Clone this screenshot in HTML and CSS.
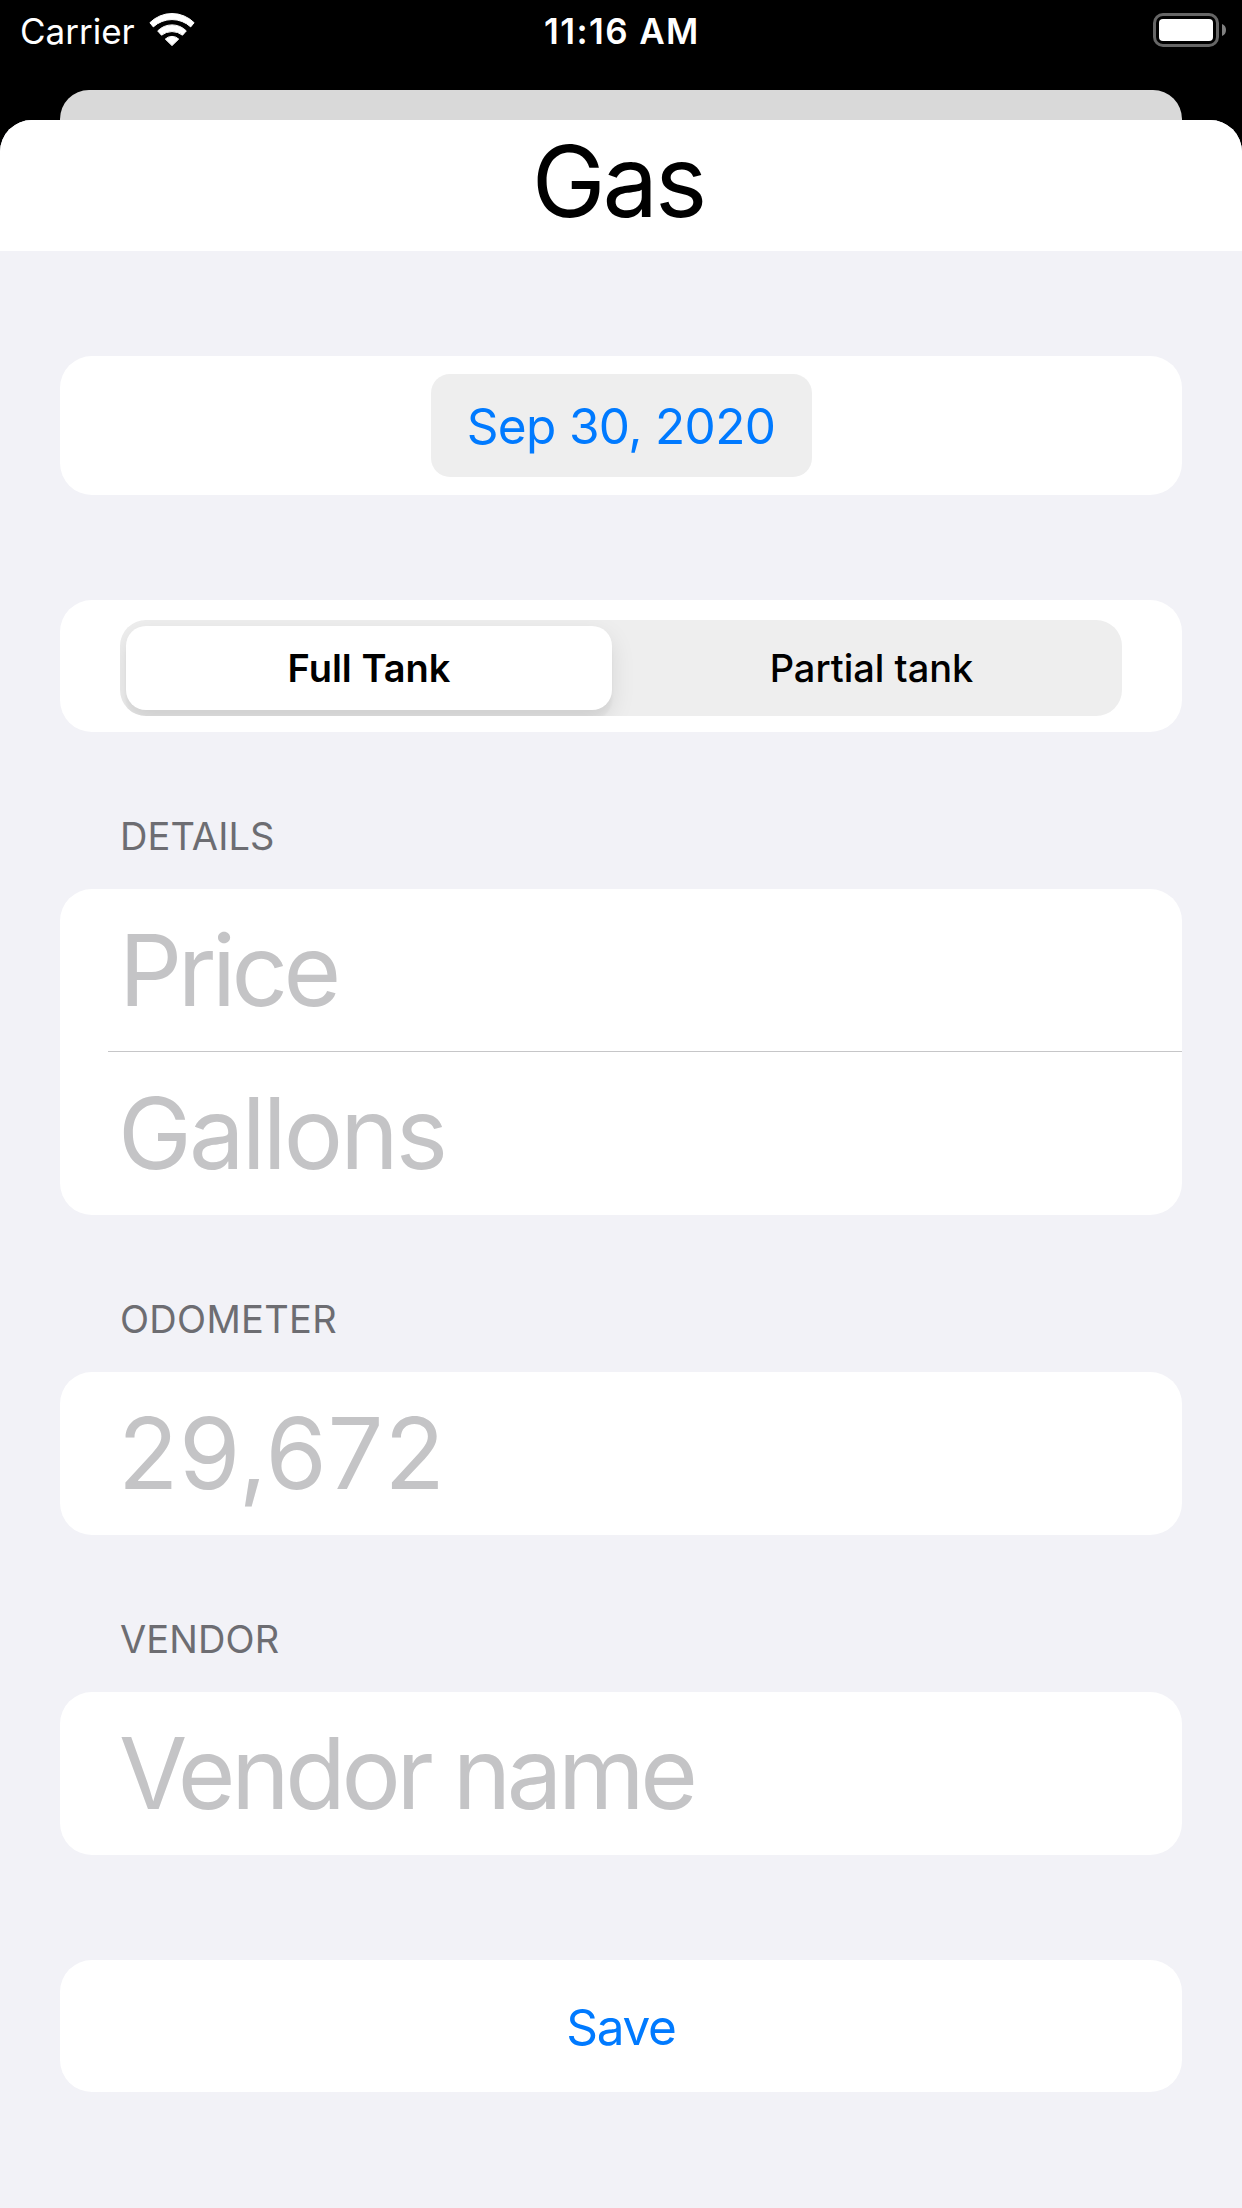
FILE: index.html
```html
<!DOCTYPE html>
<html lang="en">
<head>
<meta charset="utf-8">
<title>Gas</title>
<link rel="stylesheet" href="styles.css">
</head>
<body>
<header class="status">
  <div class="status-left">
    <span class="carrier">Carrier</span>
    <svg class="wifi" width="46" height="34" viewBox="149 13 46 34">
      <g fill="#fff" stroke="#fff" stroke-width="1" stroke-linejoin="round">
        <path d="M149.9 22.7A31.2 31.2 0 0 1 194.1 22.7L190.7 26.9A27.5 27.5 0 0 0 153.3 26.9Z"/>
        <path d="M157.7 30.9A20 20 0 0 1 186.3 30.9L182.5 35.2A17 17 0 0 0 161.5 35.2Z"/>
        <path d="M165.3 39.1A9.6 9.6 0 0 1 178.7 39.1L172 45.6Z"/>
      </g>
    </svg>
  </div>
  <span class="time">11:16 AM</span>
  <div class="status-right">
    <svg width="73" height="34" viewBox="0 0 73 34">
      <rect x="1.5" y="1.5" width="63" height="31" rx="8.5" fill="none" stroke="#666" stroke-width="3"/>
      <rect x="6" y="6" width="54" height="22" rx="4" fill="#fff"/>
      <path d="M69 11Q73 12.5 73 17T69 23Z" fill="#808080"/>
    </svg>
  </div>
</header>
<div class="back-sheet"></div>
<main class="sheet">
  <h1 class="title">Gas</h1>
  <form class="form">
    <section class="card date-card"><span class="date">Sep 30, 2020</span></section>
    <section class="card tank-card">
      <div class="segments">
        <span class="segment selected">Full Tank</span>
        <span class="segment">Partial tank</span>
      </div>
    </section>
    <h2 class="label">DETAILS</h2>
    <section class="card">
      <div class="field price">Price</div>
      <div class="divider"></div>
      <div class="field gallons">Gallons</div>
    </section>
    <h2 class="label odometer-label">ODOMETER</h2>
    <section class="card"><div class="field odometer">29,672</div></section>
    <h2 class="label vendor-label">VENDOR</h2>
    <section class="card"><div class="field vendor">Vendor name</div></section>
    <section class="card save-card"><span class="save">Save</span></section>
  </form>
</main>
</body>
</html>
```
FILE: styles.css
```css
* { box-sizing: border-box; }

body {
  margin: 0;
  height: 2208px;
  display: flex;
  flex-direction: column;
  overflow: hidden;
  background: #000;
  color: #000;
  font-family: Inter, "Liberation Sans", sans-serif;
}

/* Status bar */
.status {
  height: 90px;
  padding: 0 16px 28px 20px;
  display: grid;
  grid-template-columns: 524px 1fr 524px;
  align-items: center;
  color: #fff;
  font-size: 35px;
  line-height: 42px;
}
.status-left { display: flex; align-items: center; gap: 14px; }
.wifi { margin-top: -2px; }
.time { font-weight: 600; letter-spacing: 1.4px; white-space: nowrap; }
.status-right { display: flex; justify-content: flex-end; margin-top: -2px; }

/* Sheets */
.back-sheet {
  height: 30px;
  margin: 0 60px;
  border-radius: 29px 29px 0 0;
  background: #d9d9d9;
}
.sheet {
  flex: 1;
  border-radius: 32px 32px 0 0;
  overflow: hidden;
  background: #f2f2f7;
}
.title {
  margin: 0;
  height: 131px;
  padding-right: 6px;
  background: #fff;
  font-size: 99px;
  font-weight: 400;
  line-height: 122px;
  letter-spacing: -3px;
  text-align: center;
}

/* Form */
.form { padding: 105px 60px 0; }
.card { border-radius: 32px; background: #fff; }

.date-card {
  height: 139px;
  display: flex;
  align-items: center;
  justify-content: center;
}
.date {
  width: 381px;
  height: 103px;
  border-radius: 19px;
  background: #eee;
  color: #007aff;
  font-size: 49.5px;
  line-height: 105px;
  letter-spacing: -0.65px;
  text-align: center;
}

.tank-card { height: 132px; margin-top: 105px; padding: 20px 60px 16px; }
.segments {
  height: 96px;
  padding: 6px 0 6px 6px;
  display: flex;
  border-radius: 26px;
  overflow: hidden;
  background: #eee;
}
.segment {
  flex: 1;
  padding-left: 9px;
  font-size: 38px;
  font-weight: 500;
  line-height: 84px;
  text-align: center;
}
.segment.selected {
  flex: none;
  width: 486px;
  padding: 0;
  border-radius: 20px;
  background: #fff;
  box-shadow: 0 9px 24px rgba(0, 0, 0, .1), 0 9px 3px rgba(0, 0, 0, .04);
  font-weight: 600;
}

.label {
  margin: 0;
  height: 157px;
  padding: 81px 60px 0;
  color: #6d6d72;
  font-size: 38px;
  font-weight: 400;
  line-height: 46px;
  letter-spacing: 0.1px;
}
.odometer-label { letter-spacing: 0.3px; }
.vendor-label { letter-spacing: 0.1px; }

.field {
  height: 163px;
  padding-left: 58px;
  color: #c4c4c6;
  font-size: 99px;
  line-height: 163px;
  white-space: nowrap;
}
.price { height: 162px; padding-left: 59px; letter-spacing: -4.49px; }
.gallons { letter-spacing: -2.9px; }
.odometer { letter-spacing: 0.74px; }
.vendor { padding-left: 59px; letter-spacing: -4.41px; }
.divider { height: 1px; margin-left: 48px; background: #c6c6c8; }

.save-card {
  height: 132px;
  margin-top: 105px;
  padding-top: 1px;
  display: flex;
  align-items: center;
  justify-content: center;
}
.save { color: #007aff; font-size: 49.5px; line-height: 60px; letter-spacing: -1.3px; }
```
